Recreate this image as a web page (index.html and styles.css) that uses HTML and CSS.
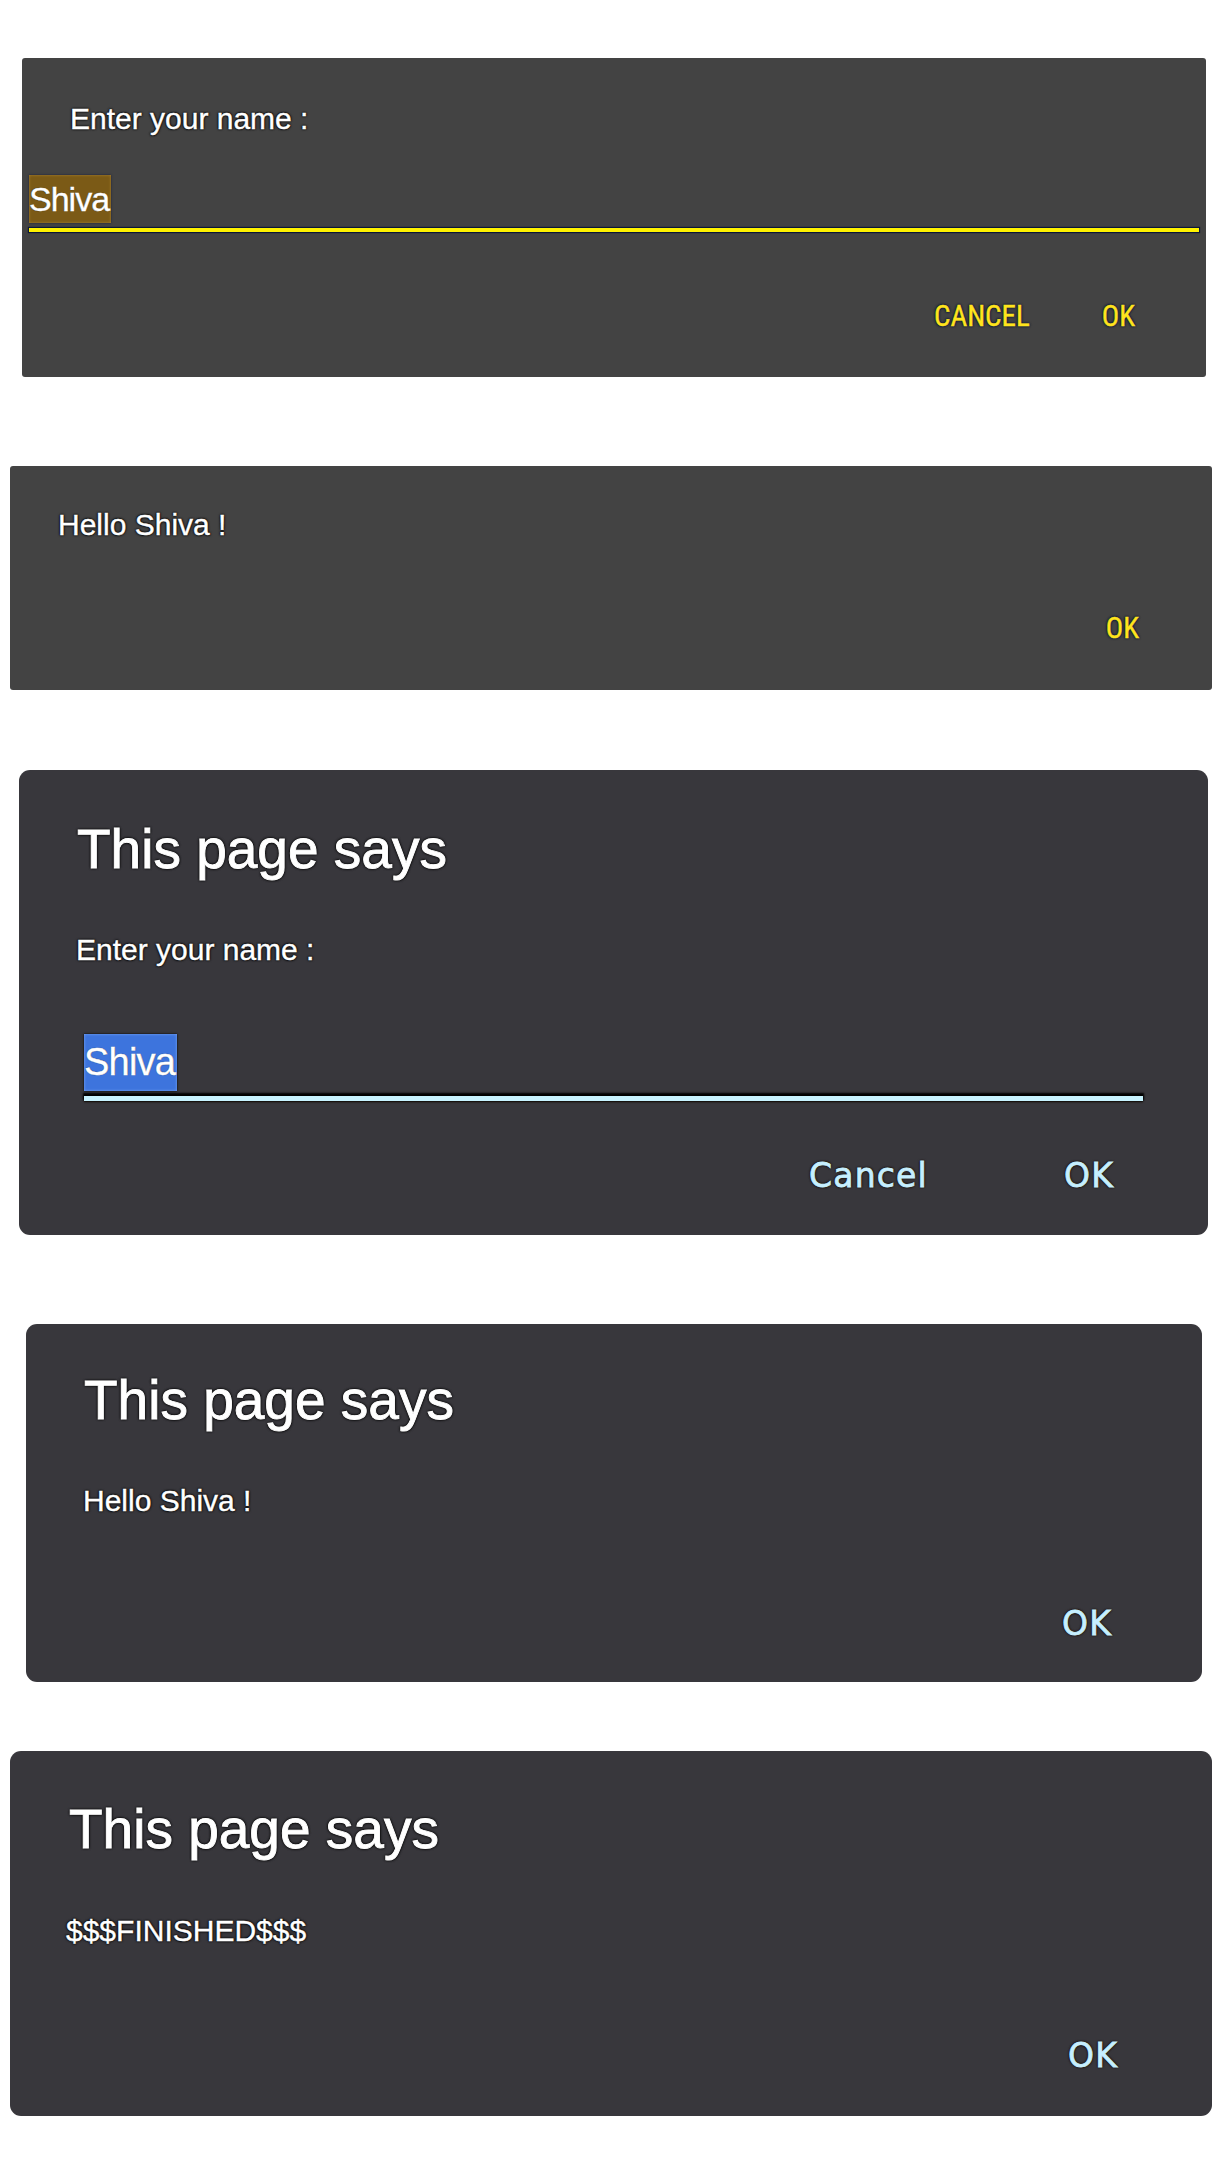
FILE: index.html
```html
<!DOCTYPE html>
<html lang="en">
<head>
<meta charset="utf-8">
<title>Prompt dialogs</title>
<link rel="stylesheet" href="styles.css">
</head>
<body>
<main class="page">
  <section class="dlg dlg-android dlg-1">
    <p class="msg msg-a1">Enter your name :</p>
    <div class="field field-android">
      <span class="sel sel-gold">Shiva</span>
      <div class="rule rule-yellow"></div>
    </div>
    <div class="actions actions-1">
      <span class="btn btn-yellow">CANCEL</span>
      <span class="btn btn-yellow">OK</span>
    </div>
  </section>

  <section class="dlg dlg-android dlg-2">
    <p class="msg msg-a2">Hello Shiva !</p>
    <div class="actions actions-2">
      <span class="btn btn-yellow">OK</span>
    </div>
  </section>

  <section class="dlg dlg-chrome dlg-3">
    <h2 class="title title-3">This page says</h2>
    <p class="msg msg-c3">Enter your name :</p>
    <div class="field field-chrome">
      <span class="sel sel-blue">Shiva</span>
      <div class="rule rule-cyan"></div>
    </div>
    <div class="actions actions-3">
      <span class="btn btn-cyan">Cancel</span>
      <span class="btn btn-cyan">OK</span>
    </div>
  </section>

  <section class="dlg dlg-chrome dlg-4">
    <h2 class="title title-4">This page says</h2>
    <p class="msg msg-c4">Hello Shiva !</p>
    <div class="actions actions-4">
      <span class="btn btn-cyan">OK</span>
    </div>
  </section>

  <section class="dlg dlg-chrome dlg-5">
    <h2 class="title title-5">This page says</h2>
    <p class="msg msg-c5">$$$FINISHED$$$</p>
    <div class="actions actions-5">
      <span class="btn btn-cyan">OK</span>
    </div>
  </section>
</main>
</body>
</html>
```

FILE: styles.css
```css
* { box-sizing: border-box; }

html, body {
  margin: 0;
  padding: 0;
  background: #ffffff;
}

body {
  font-family: "Liberation Sans", Arial, sans-serif;
  color: #ffffff;
}

.page {
  display: flex;
  flex-direction: column;
  align-items: flex-start;
}

/* ---------- dialog shells ---------- */
.dlg {
  display: flex;
  flex-direction: column;
  align-items: stretch;
}

.dlg-android {
  background: #434343;
  border-radius: 3px;
}

.dlg-chrome {
  background: #38373c;
  border-radius: 11px;
}

.dlg-1 { margin-top: 58px; margin-left: 22px; width: 1184px; height: 319px; padding-top: 43px; }
.dlg-2 { margin-top: 89px; margin-left: 10px; width: 1202px; height: 224px; padding-top: 41px; }
.dlg-3 { margin-top: 80px; margin-left: 19px; width: 1189px; height: 465px; padding-top: 47px; }
.dlg-4 { margin-top: 89px; margin-left: 26px; width: 1176px; height: 358px; padding-top: 44px; }
.dlg-5 { margin-top: 69px; margin-left: 10px; width: 1202px; height: 365px; padding-top: 46px; }

/* ---------- text ---------- */
.title {
  margin: 0;
  font-family: "Liberation Sans", Arial, sans-serif;
  font-weight: 400;
  font-size: 55px;
  line-height: 64px;
  letter-spacing: 0;
  -webkit-text-stroke: 0.9px #ffffff;
  text-shadow: 0 0 2px #000, 0 0 3px #000, 0 0 3px #000;
}

.title-3 { margin-left: 58px; }
.title-4 { margin-left: 58px; }
.title-5 { margin-left: 59px; }

.msg {
  margin: 0;
  font-size: 30px;
  line-height: 36px;
  -webkit-text-stroke: 0.4px #ffffff;
  text-shadow: 0 0 2px #000, 0 0 2px #000, 0 0 3px #000;
}

.msg-a1 { margin-left: 48px; }
.msg-a2 { margin-left: 48px; }
.msg-c3 { margin-left: 57px; margin-top: 51px; }
.msg-c4 { margin-left: 57px; margin-top: 51px; }
.msg-c5 { margin-left: 56px; margin-top: 52px; }

/* ---------- input fields ---------- */
.field {
  display: flex;
  flex-direction: column;
  align-items: flex-start;
}

.field-android {
  margin: 38px 7px 0 7px;
}

.field-chrome {
  margin: 66px 65px 0 65px;
}

.sel {
  display: inline-block;
  color: #ffffff;
  -webkit-text-stroke: 0.4px #ffffff;
  text-shadow: 0 0 1px #000;
}

.sel-gold {
  background: #7b5a16;
  box-shadow: inset 0 0 3px #a98230, 0 0 2px #1a2040;
  font-size: 34px;
  line-height: 48px;
  padding: 0 2px 0 0;
  letter-spacing: -1px;
}

.sel-blue {
  background: #3d74dd;
  box-shadow: inset 0 0 3px #7aa6f4, 0 0 2px #000;
  font-size: 38px;
  line-height: 57px;
  padding: 0 2px 0 0;
  letter-spacing: -0.8px;
}

.rule {
  align-self: stretch;
}

.rule-yellow {
  margin-top: 5px;
  height: 4px;
  background: #fff200;
  box-shadow: 0 0 1px 1px #0c1838;
}

.rule-cyan {
  margin-top: 5px;
  height: 5px;
  background: #c8f3ff;
  box-shadow: 0 -2px 2px 1px #000, 0 1px 2px #100800;
}

/* ---------- action buttons ---------- */
.actions {
  margin-top: auto;
  display: flex;
  justify-content: flex-end;
  align-items: baseline;
}

.actions-1 { gap: 72px; padding-right: 71px; padding-bottom: 43px; }
.actions-2 { padding-right: 73px; padding-bottom: 44px; }
.actions-3 { gap: 136px; padding-right: 94px; padding-bottom: 41px; }
.actions-4 { padding-right: 90px; padding-bottom: 40px; }
.actions-5 { padding-right: 94px; padding-bottom: 42px; }

.btn {
  display: inline-block;
  line-height: 36px;
}

.btn-yellow {
  font-family: "Liberation Sans Narrow", "Roboto Condensed", "Roboto", sans-serif;
  font-size: 29px;
  color: #ffe41c;
  -webkit-text-stroke: 0.4px #ffe41c;
  text-shadow: 0 0 2px #0a1436, 0 0 2px #0a1436, 0 0 3px #0a1436;
}

.btn-cyan {
  font-family: "DejaVu Sans", "Liberation Sans", sans-serif;
  font-size: 33px;
  letter-spacing: 1.2px;
  color: #c6efff;
  -webkit-text-stroke: 0.8px #c6efff;
  text-shadow: 0 0 2px #1a0c00, 0 0 2px #1a0c00, 0 0 3px #1a0c00;
}
```
